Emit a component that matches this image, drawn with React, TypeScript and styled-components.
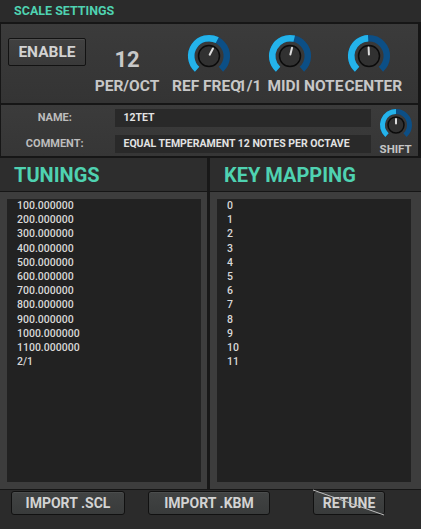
import React from "react";
import styled, { createGlobalStyle } from "styled-components";

const GlobalStyle = createGlobalStyle`
  *, *::before, *::after { box-sizing: border-box; }
  html, body { margin: 0; padding: 0; background: #2b2b2b; }
  body { font-family: Roboto, "Liberation Sans", sans-serif; }
`;

const Frame = styled.div`
  width: 421px;
  height: 529px;
  background: #2b2b2b;
  display: flex;
  flex-direction: column;
  overflow: hidden;
  font-family: Roboto, "Liberation Sans", sans-serif;
`;

const TitleBar = styled.div`
  height: 22px;
  line-height: 22px;
  padding-left: 14px;
  font-size: 12.5px;
  font-weight: 700;
  color: #4fd2b1;
`;

const TopPanel = styled.section`
  height: 83px;
  border-top: 2px solid #161616;
  border-left: 1px solid #161616;
  border-right: 3px solid #161616;
  border-bottom: 2px solid #161616;
  background: linear-gradient(#3b3b3b, #343434);
  padding: 9px 0 0 7px;
  display: flex;
  flex-direction: column;
`;

const ControlRow = styled.div`
  display: flex;
  align-items: flex-start;
  height: 46px;
`;

const LabelRow = styled.div`
  display: flex;
  align-items: flex-start;
`;

const EnableButton = styled.button`
  width: 78px;
  height: 28px;
  margin-top: 5px;
  flex: none;
  background: linear-gradient(#414141, #393939);
  border: 1px solid #121212;
  border-radius: 2px;
  box-shadow: inset 0 1px 0 rgba(255, 255, 255, 0.07);
  color: #d2d2d2;
  font-family: Roboto, "Liberation Sans", sans-serif;
  font-size: 15.5px;
  font-weight: 700;
  padding: 0;
`;

const Readout = styled.div<{ $ml: number }>`
  width: 66px;
  margin-left: ${(p) => p.$ml}px;
  margin-top: 16px;
  text-align: center;
  font-size: 22px;
  line-height: 22px;
  font-weight: 700;
  color: #c8c8c8;
`;

const ControlLabel = styled.span<{ $ml: number; $w?: number }>`
  display: block;
  flex: none;
  margin-left: ${(p) => p.$ml}px;
  width: ${(p) => (p.$w ? `${p.$w}px` : "auto")};
  text-align: center;
  font-size: 15.5px;
  line-height: 15px;
  font-weight: 700;
  color: #c7c7c7;
  white-space: nowrap;
`;

const KnobSvg = styled.svg<{ $ml: number; $mt: number }>`
  display: block;
  flex: none;
  margin-left: ${(p) => p.$ml}px;
  margin-top: ${(p) => p.$mt}px;
`;

type KnobProps = {
  size: number;
  radius: number;
  thickness: number;
  cap: number;
  value: number;
  ml?: number;
  mt?: number;
};

function Knob({ size, radius, thickness, cap, value, ml = 0, mt = 0 }: KnobProps) {
  const c = size / 2;
  const a0 = -138;
  const a1 = 138;
  const av = a0 + value * (a1 - a0);
  const pt = (a: number, r: number): [number, number] => [
    c + r * Math.sin((a * Math.PI) / 180),
    c - r * Math.cos((a * Math.PI) / 180),
  ];
  const arc = (from: number, to: number) => {
    const [x0, y0] = pt(from, radius);
    const [x1, y1] = pt(to, radius);
    return `M ${x0} ${y0} A ${radius} ${radius} 0 ${to - from > 180 ? 1 : 0} 1 ${x1} ${y1}`;
  };
  const [px0, py0] = pt(av, 1.5);
  const [px1, py1] = pt(av, cap - 2);
  return (
    <KnobSvg $ml={ml} $mt={mt} width={size} height={size} viewBox={`0 0 ${size} ${size}`}>
      <path d={arc(a0, a1)} stroke="#0c4f86" strokeWidth={thickness} fill="none" />
      <path d={arc(a0, av)} stroke="#24b3ea" strokeWidth={thickness} fill="none" />
      <circle cx={c} cy={c} r={cap} fill="#313131" stroke="#0b0b0b" strokeWidth={1.5} />
      <line x1={px0} y1={py0} x2={px1} y2={py1} stroke="#dcdcdc" strokeWidth={2} strokeLinecap="round" />
    </KnobSvg>
  );
}

const InfoPanel = styled.section`
  height: 53px;
  border-left: 1px solid #161616;
  border-right: 3px solid #161616;
  border-bottom: 2px solid #161616;
  background: linear-gradient(#3b3b3b, #363636);
  padding-top: 4px;
  display: flex;
  align-items: flex-start;
`;

const InfoLabels = styled.div`
  width: 108px;
  display: flex;
  flex-direction: column;
  gap: 8px;
`;

const InfoLabel = styled.div`
  height: 18px;
  line-height: 18px;
  text-align: center;
  font-size: 11px;
  font-weight: 700;
  color: #bdbdbd;
`;

const InfoFields = styled.div`
  width: 257px;
  margin-left: 7px;
  display: flex;
  flex-direction: column;
  gap: 8px;
`;

const Field = styled.div`
  height: 18px;
  line-height: 18px;
  padding-left: 8px;
  background: #292929;
  color: #e2e2e2;
  font-size: 10.5px;
  font-weight: 700;
  white-space: nowrap;
  overflow: hidden;
`;

const ShiftColumn = styled.div`
  width: 45px;
  margin-left: 2px;
  display: flex;
  flex-direction: column;
  align-items: center;
`;

const ShiftLabel = styled.div`
  margin-top: 2px;
  font-size: 11.5px;
  line-height: 11px;
  font-weight: 700;
  color: #c5c5c5;
`;

const SplitRow = styled.div<{ $h: number; $bb: number }>`
  height: ${(p) => p.$h}px;
  display: grid;
  grid-template-columns: 207px 3px 1fr;
  border-bottom: ${(p) => p.$bb}px solid #161616;
`;

const Divider = styled.div`
  background: #181818;
`;

const SectionTitle = styled.div`
  background: #2d2d2d;
  padding-left: 14px;
  line-height: 32px;
  padding-top: 1px;
  font-size: 20px;
  font-weight: 700;
  color: #4fd2b1;
  white-space: nowrap;
`;

const ListWell = styled.div<{ $pr: number }>`
  background: #3d3d3d;
  padding: 7px ${(p) => p.$pr}px 7px 7px;
`;

const ListBox = styled.div`
  height: 100%;
  background: #222222;
  padding: 0 0 0 10px;
  font-size: 10.5px;
  line-height: 14.2px;
  font-weight: 500;
  color: #d8d8d8;
`;

const ListItem = styled.div`
  white-space: nowrap;
`;

const ButtonRow = styled.div`
  flex: 1;
  display: flex;
  align-items: flex-start;
  padding: 1px 0 0 11px;
`;

const ActionButton = styled.button<{ $w: number; $ml: number }>`
  position: relative;
  width: ${(p) => p.$w}px;
  height: 24px;
  margin-left: ${(p) => p.$ml}px;
  padding: 0;
  background: linear-gradient(#414343, #393b3b);
  border: 1px solid #111111;
  border-radius: 3px;
  box-shadow: inset 0 1px 0 rgba(255, 255, 255, 0.06);
  color: #d3d3d3;
  font-family: Roboto, "Liberation Sans", sans-serif;
  font-size: 14px;
  font-weight: 700;
`;

const Strike = styled.svg`
  position: absolute;
  left: -1px;
  top: -2px;
  width: calc(100% + 1px);
  height: calc(100% + 3px);
  overflow: visible;
  pointer-events: none;
`;

const tunings = [
  "100.000000",
  "200.000000",
  "300.000000",
  "400.000000",
  "500.000000",
  "600.000000",
  "700.000000",
  "800.000000",
  "900.000000",
  "1000.000000",
  "1100.000000",
  "2/1",
];

const keys = ["0", "1", "2", "3", "4", "5", "6", "7", "8", "9", "10", "11"];

export default function App() {
  return (
    <>
      <GlobalStyle />
      <Frame>
        <TitleBar>SCALE SETTINGS</TitleBar>

        <TopPanel>
          <ControlRow>
            <EnableButton>ENABLE</EnableButton>
            <Readout $ml={8}>12</Readout>
            <Knob size={46} radius={17.8} thickness={6.5} cap={10.5} value={0.6} ml={26} />
            <Knob size={46} radius={17.8} thickness={6.5} cap={10.5} value={0.55} ml={35} />
            <Knob size={46} radius={17.8} thickness={6.5} cap={10.5} value={0.49} ml={33} />
          </ControlRow>
          <LabelRow>
            <ControlLabel $ml={86} $w={66}>PER/OCT</ControlLabel>
            <ControlLabel $ml={12}>REF FREQ</ControlLabel>
            <ControlLabel $ml={-3}>1/1</ControlLabel>
            <ControlLabel $ml={6}>MIDI NOTE</ControlLabel>
            <ControlLabel $ml={1}>CENTER</ControlLabel>
          </LabelRow>
        </TopPanel>

        <InfoPanel>
          <InfoLabels>
            <InfoLabel>NAME:</InfoLabel>
            <InfoLabel>COMMENT:</InfoLabel>
          </InfoLabels>
          <InfoFields>
            <Field>12TET</Field>
            <Field>EQUAL TEMPERAMENT 12 NOTES PER OCTAVE</Field>
          </InfoFields>
          <ShiftColumn>
            <Knob size={34} radius={13.5} thickness={5} cap={8} value={0.5} mt={-1} />
            <ShiftLabel>SHIFT</ShiftLabel>
          </ShiftColumn>
        </InfoPanel>

        <SplitRow $h={34} $bb={2}>
          <SectionTitle>TUNINGS</SectionTitle>
          <Divider />
          <SectionTitle>KEY MAPPING</SectionTitle>
        </SplitRow>

        <SplitRow $h={298} $bb={1}>
          <ListWell $pr={6}>
            <ListBox>
              {tunings.map((t) => (
                <ListItem key={t}>{t}</ListItem>
              ))}
            </ListBox>
          </ListWell>
          <Divider />
          <ListWell $pr={10}>
            <ListBox>
              {keys.map((k) => (
                <ListItem key={k}>{k}</ListItem>
              ))}
            </ListBox>
          </ListWell>
        </SplitRow>

        <ButtonRow>
          <ActionButton $w={114} $ml={0}>IMPORT .SCL</ActionButton>
          <ActionButton $w={122} $ml={23}>IMPORT .KBM</ActionButton>
          <ActionButton $w={72} $ml={43}>
            RETUNE
            <Strike viewBox="0 0 100 100" preserveAspectRatio="none">
              <line x1="0" y1="0" x2="100" y2="100" stroke="#bdbdbd" strokeWidth="1" vectorEffect="non-scaling-stroke" />
            </Strike>
          </ActionButton>
        </ButtonRow>
      </Frame>
    </>
  );
}
